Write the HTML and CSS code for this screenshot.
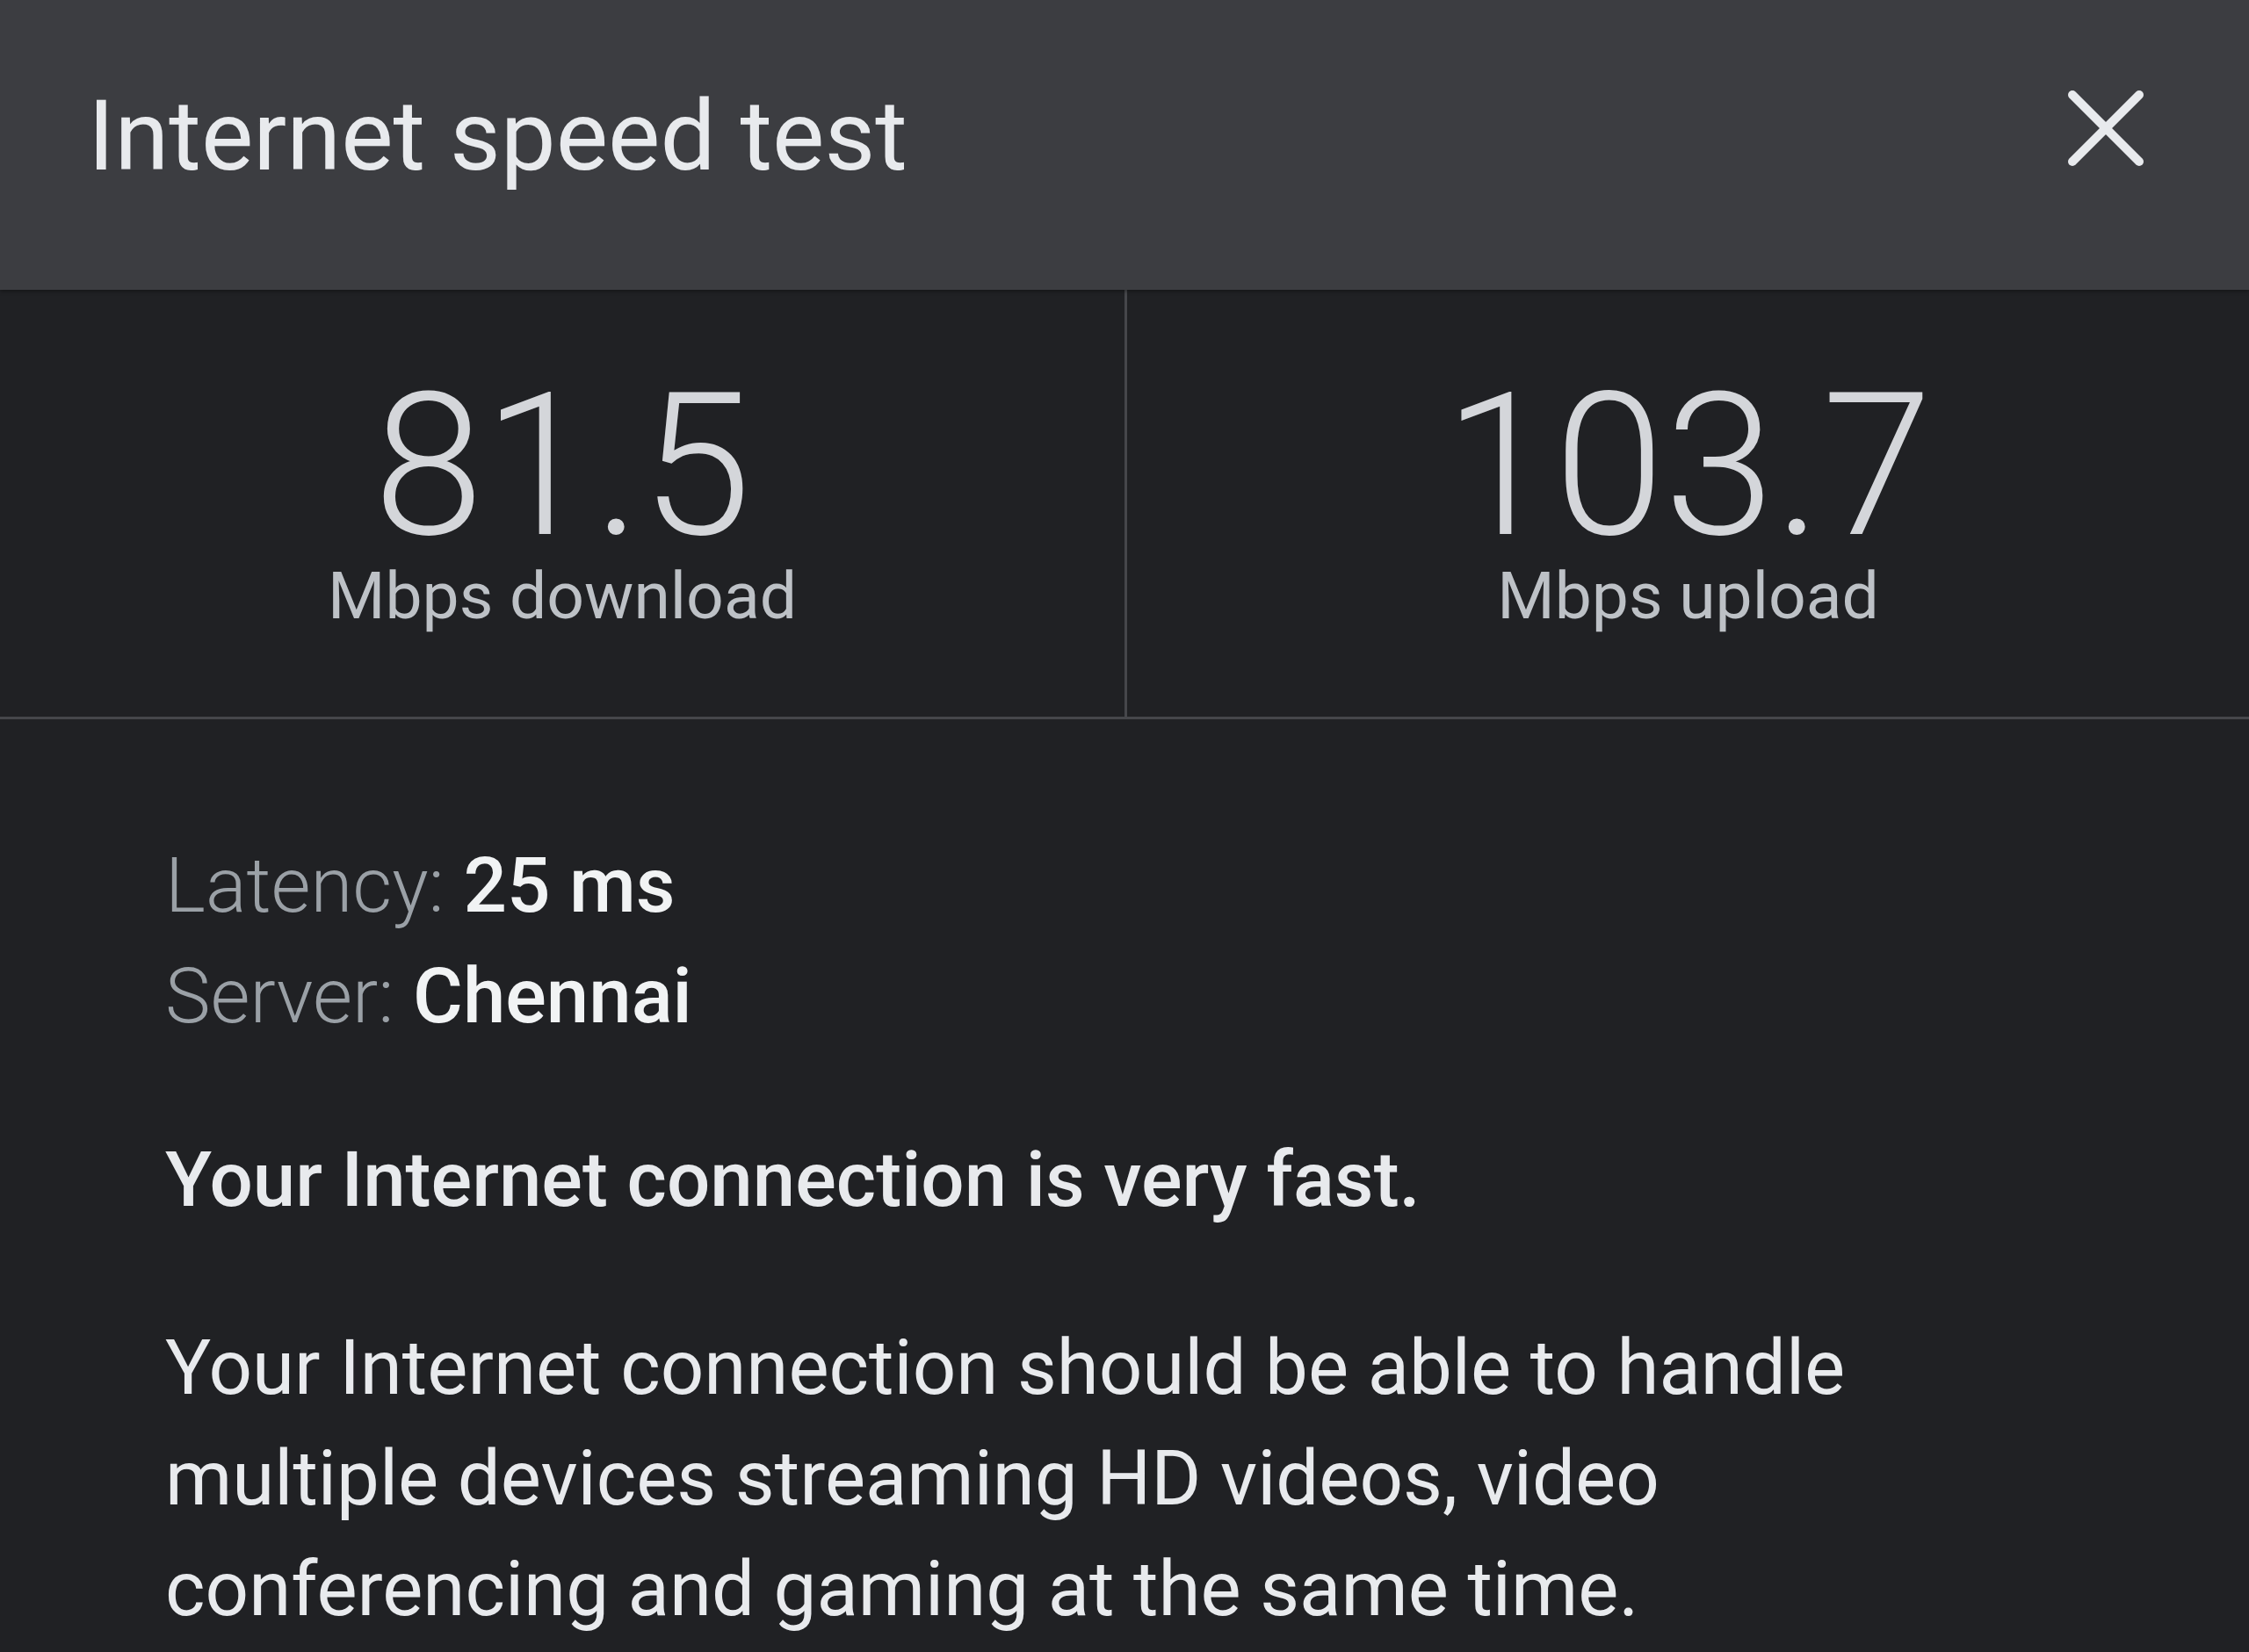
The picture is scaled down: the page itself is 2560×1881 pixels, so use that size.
FILE: index.html
```html
<!DOCTYPE html>
<html lang="en">
<head>
  <meta charset="UTF-8">
  <meta name="viewport" content="width=device-width, initial-scale=1">
  <title>Internet speed test</title>
  <link rel="stylesheet" href="styles.css">
</head>
<body>

  <header class="topbar">
    <h1 class="titulo">Internet speed test</h1>
    <svg class="fechar" viewBox="0 0 88 88" width="88" height="88" aria-label="Close">
      <line x1="6" y1="6" x2="82" y2="82" />
      <line x1="82" y1="6" x2="6" y2="82" />
    </svg>
  </header>

  <section class="medidas">
    <div class="medida">
      <div class="numero">81.5</div>
      <div class="unidade">Mbps download</div>
    </div>
    <div class="medida">
      <div class="numero">103.7</div>
      <div class="unidade">Mbps upload</div>
    </div>
  </section>

  <section class="detalhes">
    <div class="linha"><span class="rotulo">Latency:</span> <span class="valor">25 ms</span></div>
    <div class="linha"><span class="rotulo">Server:</span> <span class="valor">Chennai</span></div>

    <p class="resumo">Your Internet connection is very fast.</p>
    <p class="texto">Your Internet connection should be able to handle multiple devices streaming HD videos, video conferencing and gaming at the same time.</p>
  </section>

</body>
</html>
```

FILE: styles.css
```css
body {
  margin: 0;
  background-color: #202124;
  font-family: Roboto, "Liberation Sans", Arial, sans-serif;
  color: #e8eaed;
}
.topbar {
  display: flex;
  justify-content: space-between;
  align-items: flex-start;
  box-sizing: border-box;
  height: 330px;
  padding: 99px 119px 0 100px;
  background-color: #3c3d41;
  box-shadow: 0 2px 4px rgba(0, 0, 0, 0.35);
  position: relative;
}
.titulo {
  margin: 0;
  font-size: 112px;
  font-weight: 400;
  line-height: 112px;
  color: #e8eaed;
}
.fechar {
  margin-top: 3px;
}
.fechar line {
  stroke: #e8eaed;
  stroke-width: 10;
  stroke-linecap: round;
}
.medidas {
  display: grid;
  grid-template-columns: 1283px 1fr;
  border-bottom: 3px solid #46474b;
}
.medida {
  box-sizing: border-box;
  height: 486px;
  padding-top: 99px;
  text-align: center;
}
.medida:first-child {
  border-right: 3px solid #46474b;
}
.numero {
  font-size: 226px;
  font-weight: 300;
  line-height: 204px;
  color: #d4d6da;
}
.unidade {
  font-size: 75px;
  line-height: 90px;
  color: #bdc1c6;
}
.detalhes {
  padding: 126px 188px 0 188px;
}
.linha {
  font-size: 87px;
  line-height: 126px;
}
.rotulo {
  font-weight: 300;
  color: #9aa0a6;
}
.valor {
  font-weight: 500;
  color: #f1f3f4;
}
.resumo {
  margin: 83px 0 0 0;
  font-size: 87px;
  font-weight: 500;
  line-height: 126px;
}
.texto {
  margin: 88px 0 0 0;
  font-size: 87px;
  line-height: 126px;
}
```
